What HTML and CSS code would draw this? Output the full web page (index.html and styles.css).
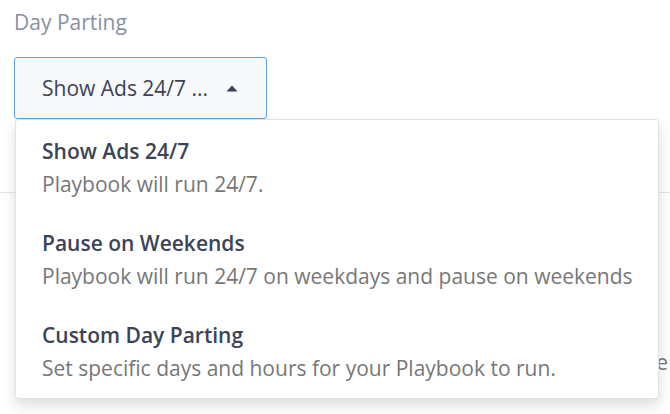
FILE: index.html
```html
<!DOCTYPE html>
<html>
<head>
<meta charset="utf-8">
<link rel="stylesheet" href="styles.css">
</head>
<body>
<div class="page">
  <div class="field">
    <div class="label">Day Parting</div>
    <div class="select">
      <button class="select-btn" type="button">
        <span class="select-value">Show Ads 24/7 ...</span>
        <svg class="caret" width="12" height="7" viewBox="0 0 12 7"><path d="M6 0.5 L11.5 6.5 L0.5 6.5 Z" fill="#3b4456"/></svg>
      </button>
      <div class="menu">
        <div class="option">
          <div class="option-title">Show Ads 24/7</div>
          <div class="option-desc">Playbook will run 24/7.</div>
        </div>
        <div class="option">
          <div class="option-title">Pause on Weekends</div>
          <div class="option-desc">Playbook will run 24/7 on weekdays and pause on weekends</div>
        </div>
        <div class="option">
          <div class="option-title">Custom Day Parting</div>
          <div class="option-desc">Set specific days and hours for your Playbook to run.</div>
        </div>
      </div>
    </div>
  </div>
  <div class="divider"></div>
  <div class="behind">
    <span class="behind-text">Schedule</span>
  </div>
</div>
</body>
</html>
```
FILE: styles.css
```css
* { box-sizing: border-box; }
html, body { margin: 0; padding: 0; background: #ffffff; }
body {
  font-family: "Open Sans", "Liberation Sans", sans-serif;
  width: 670px;
  height: 414px;
  overflow: hidden;
}
.page {
  padding: 8px 0 0 0;
}
.field {
  padding: 0 14px;
}
.label {
  font-size: 21px;
  line-height: 28px;
  color: #8791a5;
  margin-bottom: 21px;
}
.select {
  position: relative;
  width: 253px;
}
.select-btn {
  display: flex;
  align-items: center;
  width: 253px;
  height: 62px;
  padding: 0 0 0 27px;
  background: #f7f8fa;
  border: 1px solid #5ea3e4;
  border-radius: 3px;
  font-family: "Open Sans", "Liberation Sans", sans-serif;
  font-size: 21px;
  color: #3b4456;
  text-align: left;
  cursor: pointer;
}
.select-value {
  width: 184px;
  white-space: nowrap;
}
.caret {
  display: block;
}
.menu {
  position: absolute;
  top: 62px;
  left: 1px;
  width: 644px;
  background: #ffffff;
  border: 1px solid #dfe1e5;
  border-radius: 3px;
  box-shadow: 0 6px 14px rgba(0, 0, 0, 0.14);
  padding: 18px 0 17px 26px;
  z-index: 2;
}
.option {
  display: flex;
  flex-direction: column;
  gap: 7px;
}
.option + .option {
  margin-top: 33px;
}
.option-title {
  font-size: 21px;
  line-height: 26px;
  font-weight: 600;
  color: #3b4456;
}
.option-desc {
  font-size: 21px;
  line-height: 26px;
  color: #777777;
  white-space: nowrap;
}
.divider {
  margin-top: 73px;
  height: 1px;
  background: #e2e4e8;
}
.behind {
  display: flex;
  justify-content: flex-end;
  margin-top: 156px;
  padding-right: 2px;
}
.behind-text {
  font-size: 21px;
  line-height: 26px;
  color: #777777;
}
```
